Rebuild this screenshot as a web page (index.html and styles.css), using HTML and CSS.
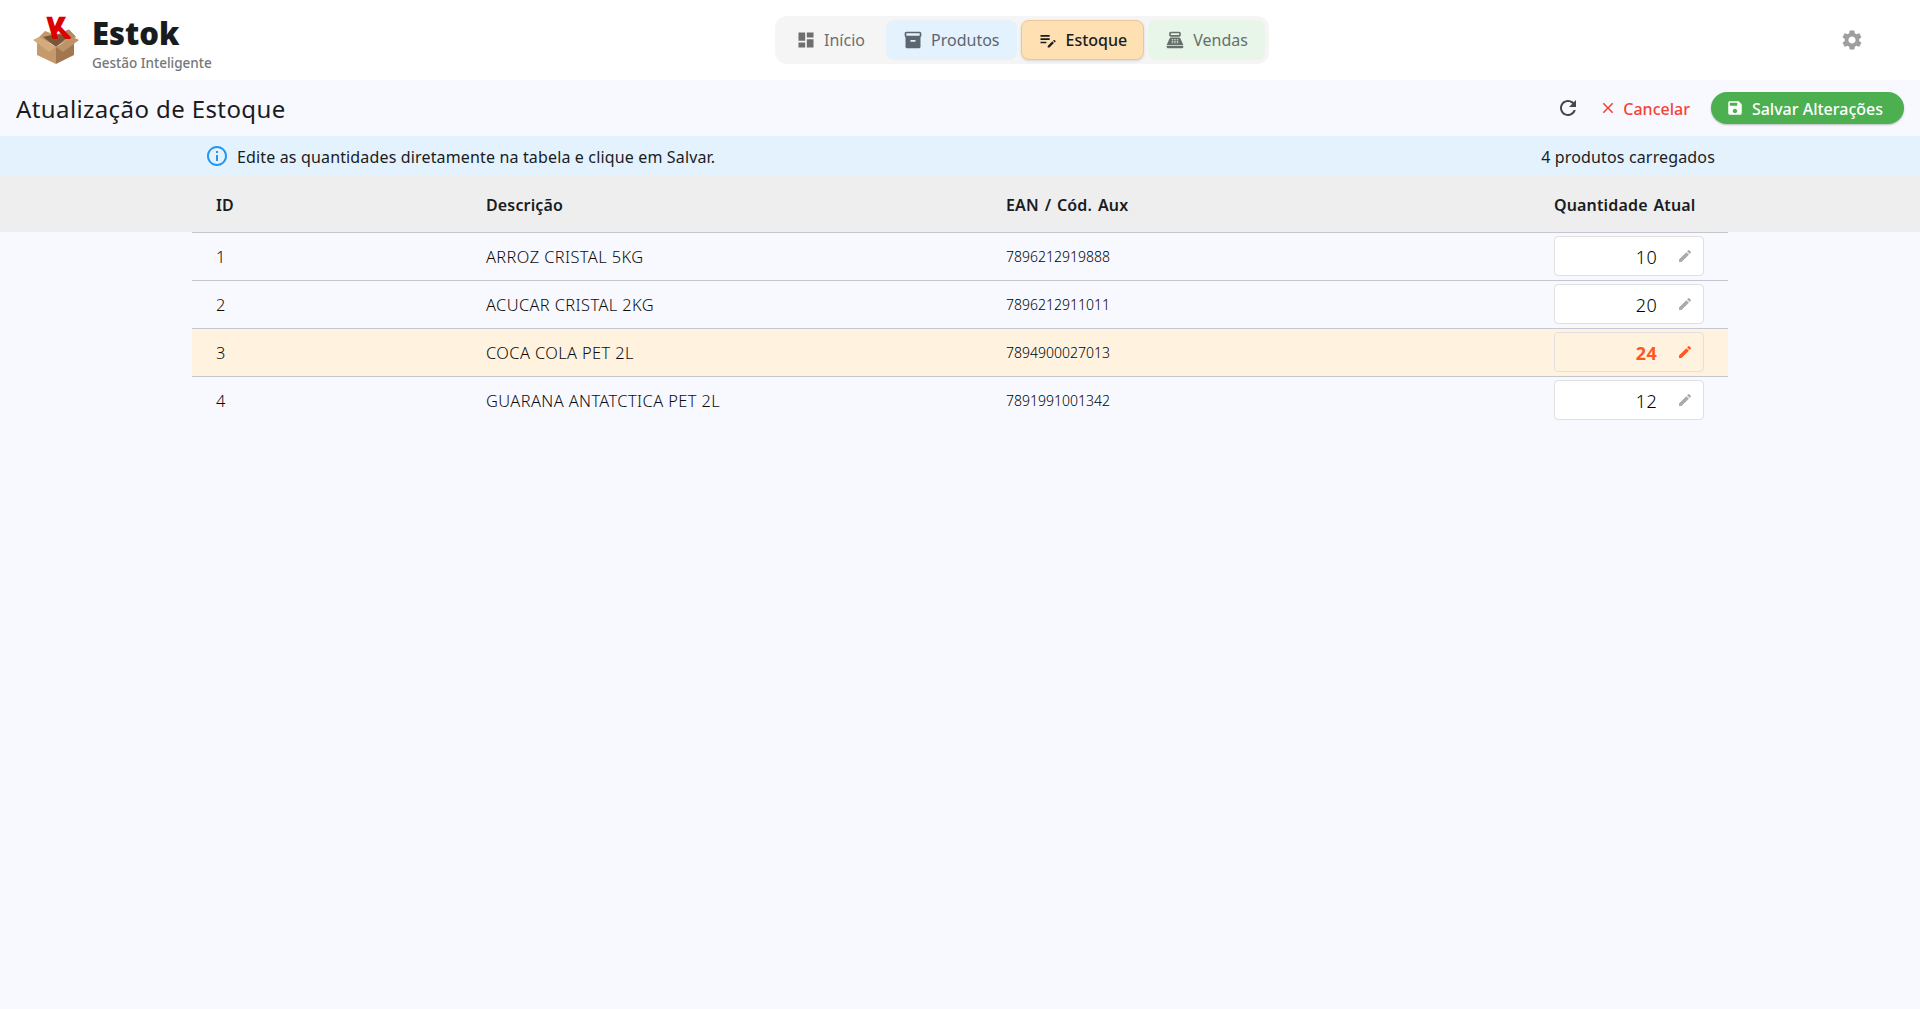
FILE: index.html
```html
<!DOCTYPE html>
<html lang="pt-BR">
<head>
<meta charset="utf-8">
<title>Estok</title>
<link rel="stylesheet" href="styles.css">
</head>
<body>
<header class="topbar">
  <div class="brand">
    <svg class="logo" viewBox="0 0 48 48" aria-hidden="true">
      <path d="M6 22 L13 15 L24 19 L37 13.500 L44 21 L24 30Z" fill="#c49a6c"/>
      <path d="M24 19 L37 13.500 L44 21 L36 23Z" fill="#b48a5f"/>
      <path d="M11 21 L24 18 L37 20 L24 31Z" fill="#7a5638"/>
      <text class="logo-k" transform="translate(19 23) skewX(16) scale(1 .95)">K</text>
      <path d="M24 31 L42 25 L42 39 L24 48Z" fill="#a2774f"/>
      <path d="M24 31 L5 25 L5 39 L24 48Z" fill="#c49a6c"/>
      <path d="M1 24 L7 21 L24 31 L17 36Z" fill="#d3ab7d"/>
      <path d="M47 24 L41 21 L24 31 L31 36Z" fill="#bd9368"/>
    </svg>
    <div class="brand-text">
      <div class="brand-name">Estok</div>
      <div class="brand-sub">Gestão Inteligente</div>
    </div>
  </div>
  <nav class="nav">
    <a class="nav-item nav-home">
      <svg class="nav-icon" viewBox="0 0 24 24"><path d="M3 13h8V3H3v10zm0 8h8v-6H3v6zm10 0h8V11h-8v10zm0-18v6h8V3h-8z"/></svg>Início
    </a>
    <a class="nav-item nav-products">
      <svg class="nav-icon" viewBox="0 0 24 24"><path d="M20 2H4c-1 0-2 .9-2 2v3.010c0 .72.43 1.340 1 1.690V20c0 1.100 1.100 2 2 2h14c.9 0 2-.9 2-2V8.700c.57-.35 1-.97 1-1.690V4c0-1.100-1-2-2-2zm-5 12H9v-2h6v2zm5-7H4V4l16-.02V7z"/></svg>Produtos
    </a>
    <a class="nav-item nav-stock">
      <svg class="nav-icon" viewBox="0 0 24 24"><path d="M3 10h11v2H3zm0-2h11V6H3zm0 8h7v-2H3zm15.010-3.130.71-.71c.39-.39 1.020-.39 1.410 0l.71.71c.39.39.39 1.020 0 1.410l-.71.71-2.120-2.120zm-1.060 1.060-5.300 5.300V21h2.120l5.300-5.300-2.120-2.120z"/></svg>Estoque
    </a>
    <a class="nav-item nav-sales">
      <svg class="nav-icon" viewBox="0 0 24 24"><path d="M17 2H7c-1.100 0-2 .9-2 2v2c0 1.100.9 2 2 2h10c1.100 0 2-.9 2-2V4c0-1.100-.9-2-2-2zm0 4H7V4h10v2zm3 16H4c-1.100 0-2-.9-2-2v-1h20v1c0 1.100-.9 2-2 2zm-1.470-11.810C18.210 9.470 17.490 9 16.700 9H7.300c-.79 0-1.510.47-1.830 1.190L2 18h20l-3.470-7.810zM9.500 16h-1c-.28 0-.5-.22-.5-.5s.22-.5.5-.5h1c.28 0 .5.22.5.5s-.22.5-.5.5zm0-2h-1c-.28 0-.5-.22-.5-.5s.22-.5.5-.5h1c.28 0 .5.22.5.5s-.22.5-.5.5zm0-2h-1c-.28 0-.5-.22-.5-.5s.22-.5.5-.5h1c.28 0 .5.22.5.5s-.22.5-.5.5zm3 4h-1c-.28 0-.5-.22-.5-.5s.22-.5.5-.5h1c.28 0 .5.22.5.5s-.22.5-.5.5zm0-2h-1c-.28 0-.5-.22-.5-.5s.22-.5.5-.5h1c.28 0 .5.22.5.5s-.22.5-.5.5zm0-2h-1c-.28 0-.5-.22-.5-.5s.22-.5.5-.5h1c.28 0 .5.22.5.5s-.22.5-.5.5zm3 4h-1c-.28 0-.5-.22-.5-.5s.22-.5.5-.5h1c.28 0 .5.22.5.5s-.22.5-.5.5zm0-2h-1c-.28 0-.5-.22-.5-.5s.22-.5.5-.5h1c.28 0 .5.22.5.5s-.22.5-.5.5zm0-2h-1c-.28 0-.5-.22-.5-.5s.22-.5.5-.5h1c.28 0 .5.22.5.5s-.22.5-.5.5z"/></svg>Vendas
    </a>
  </nav>
  <svg class="gear" viewBox="0 0 24 24"><path d="M19.140 12.940c.04-.3.06-.61.06-.94 0-.32-.02-.64-.07-.94l2.030-1.580c.18-.14.23-.41.12-.61l-1.920-3.320c-.12-.22-.37-.29-.59-.22l-2.390.96c-.5-.38-1.030-.7-1.620-.94l-.36-2.540c-.04-.24-.24-.41-.48-.41h-3.840c-.24 0-.43.17-.47.41l-.36 2.540c-.59.24-1.130.57-1.620.94l-2.390-.96c-.22-.08-.47 0-.59.22L2.740 8.870c-.12.21-.08.47.12.61l2.030 1.580c-.05.3-.09.63-.09.94s.02.64.07.94l-2.030 1.580c-.18.14-.23.41-.12.61l1.920 3.320c.12.22.37.29.59.22l2.390-.96c.5.38 1.030.7 1.620.94l.36 2.540c.05.24.24.41.48.41h3.840c.24 0 .44-.17.47-.41l.36-2.540c.59-.24 1.130-.56 1.620-.94l2.390.96c.22.08.47 0 .59-.22l1.920-3.320c.12-.22.07-.47-.12-.61l-2.010-1.580zM12 15.600c-1.980 0-3.600-1.620-3.600-3.600s1.620-3.600 3.600-3.600 3.600 1.620 3.600 3.600-1.620 3.600-3.600 3.600z"/></svg>
</header>

<section class="titlebar">
  <h1 class="page-title">Atualização de Estoque</h1>
  <div class="actions">
    <svg class="refresh" viewBox="0 0 24 24"><path d="M17.650 6.350C16.200 4.900 14.210 4 12 4c-4.420 0-7.990 3.580-7.990 8s3.570 8 7.990 8c3.730 0 6.840-2.550 7.730-6h-2.080c-.82 2.330-3.040 4-5.650 4-3.310 0-6-2.690-6-6s2.690-6 6-6c1.660 0 3.140.69 4.220 1.780L13 11h7V4l-2.350 2.350z"/></svg>
    <button class="btn-cancel">
      <svg class="btn-icon" viewBox="0 0 24 24"><path d="M19 6.410 17.590 5 12 10.590 6.410 5 5 6.410 10.590 12 5 17.590 6.410 19 12 13.410 17.590 19 19 17.590 13.410 12z"/></svg><span class="btn-label">Cancelar</span>
    </button>
    <button class="btn-save">
      <svg class="btn-icon" viewBox="0 0 24 24"><path d="M17 3H5c-1.110 0-2 .9-2 2v14c0 1.100.89 2 2 2h14c1.100 0 2-.9 2-2V7l-4-4zm-5 16c-1.660 0-3-1.340-3-3s1.340-3 3-3 3 1.340 3 3-1.340 3-3 3zm3-10H5V5h10v4z"/></svg><span class="btn-label">Salvar Alterações</span>
    </button>
  </div>
</section>

<section class="infobar">
  <div class="info-inner">
    <div class="info-left">
      <svg class="info-icon" viewBox="0 0 24 24"><path d="M11 7h2v2h-2zm0 4h2v6h-2zm1-9C6.480 2 2 6.480 2 12s4.480 10 10 10 10-4.480 10-10S17.520 2 12 2zm0 18c-4.410 0-8-3.590-8-8s3.590-8 8-8 8 3.590 8 8-3.590 8-8 8z"/></svg>
      <span>Edite as quantidades diretamente na tabela e clique em Salvar.</span>
    </div>
    <span>4 produtos carregados</span>
  </div>
</section>

<div class="head-band">
  <div class="row row-head">
    <div>ID</div><div>Descrição</div><div>EAN / Cód. Aux</div><div>Quantidade Atual</div>
  </div>
</div>
<main class="tbody">
  <div class="row row-body">
    <div>1</div><div>ARROZ CRISTAL 5KG</div><div class="ean">7896212919888</div>
    <div class="qty"><span class="qty-val">10</span><svg class="pencil" viewBox="0 0 24 24"><path d="M3 17.250V21h3.750L17.810 9.940l-3.750-3.750L3 17.250zM20.710 7.040c.39-.39.39-1.020 0-1.410l-2.340-2.340c-.39-.39-1.020-.39-1.410 0l-1.830 1.830 3.750 3.750 1.830-1.830z"/></svg></div>
  </div>
  <div class="row row-body">
    <div>2</div><div>ACUCAR CRISTAL 2KG</div><div class="ean">7896212911011</div>
    <div class="qty"><span class="qty-val">20</span><svg class="pencil" viewBox="0 0 24 24"><path d="M3 17.250V21h3.750L17.810 9.940l-3.750-3.750L3 17.250zM20.710 7.040c.39-.39.39-1.020 0-1.410l-2.340-2.340c-.39-.39-1.020-.39-1.410 0l-1.830 1.830 3.750 3.750 1.830-1.830z"/></svg></div>
  </div>
  <div class="row row-body row-changed">
    <div>3</div><div>COCA COLA PET 2L</div><div class="ean">7894900027013</div>
    <div class="qty"><span class="qty-val">24</span><svg class="pencil" viewBox="0 0 24 24"><path d="M3 17.250V21h3.750L17.810 9.940l-3.750-3.750L3 17.250zM20.710 7.040c.39-.39.39-1.020 0-1.410l-2.340-2.340c-.39-.39-1.020-.39-1.410 0l-1.830 1.830 3.750 3.750 1.830-1.830z"/></svg></div>
  </div>
  <div class="row row-body">
    <div>4</div><div>GUARANA ANTATCTICA PET 2L</div><div class="ean">7891991001342</div>
    <div class="qty"><span class="qty-val">12</span><svg class="pencil" viewBox="0 0 24 24"><path d="M3 17.250V21h3.750L17.810 9.940l-3.750-3.750L3 17.250zM20.710 7.040c.39-.39.39-1.020 0-1.410l-2.340-2.340c-.39-.39-1.020-.39-1.410 0l-1.830 1.830 3.750 3.750 1.830-1.830z"/></svg></div>
  </div>
</main>
</body>
</html>
```
FILE: styles.css
```css
* { box-sizing: border-box; }
html, body { height: 100%; }
body {
  margin: 0;
  background: #f8f9ff;
  color: #1a1c1e;
  font-family: "Noto Sans", "Open Sans", sans-serif;
  font-size: 16px;
  overflow: hidden;
}
.topbar {
  height: 80px;
  background: #fff;
  display: flex;
  justify-content: space-between;
  align-items: center;
  padding: 0 56px 0 32px;
}
.brand { display: flex; align-items: center; gap: 12px; width: 172px; }
.logo { width: 48px; height: 48px; display: block; overflow: visible; flex: none; }
.logo-k {
  font-family: "Roboto", sans-serif;
  font-weight: 900;
  font-size: 33px;
  fill: #dd0000;
}
.brand-text { display: flex; flex-direction: column; padding-top: 6px; }
.brand-name { font-size: 31px; font-weight: 900; line-height: 38px; color: #191c1f; }
.brand-sub { font-size: 13.5px; font-weight: 500; line-height: 18px; margin-top: 2px; color: #74777b; white-space: nowrap; }
.nav {
  display: flex;
  gap: 4px;
  padding: 4px;
  height: 48px;
  background: #f5f5f5;
  border-radius: 12px;
}
.nav-item {
  display: flex;
  align-items: center;
  gap: 8px;
  height: 40px;
  padding: 0 17px;
  border-radius: 8px;
  color: #5f6368;
}
.nav-icon { width: 20px; height: 20px; fill: currentColor; }
.nav-home { color: #6e6e6e; }
.nav-products { background: #e3f2fd; color: #5c6670; }
.nav-stock {
  background: #ffe0b2;
  color: #1a1c1e;
  border: 1px solid #eac79a;
  padding: 0 16px;
  font-weight: 500;
  box-shadow: 0 1px 3px rgba(0,0,0,.12);
}
.nav-sales { background: #e8f5e9; color: #66706a; }
.gear { width: 24px; height: 24px; fill: #9e9e9e; }

.titlebar {
  height: 56px;
  display: flex;
  align-items: center;
  justify-content: space-between;
  padding: 0 16px;
}
.page-title { margin: 0; padding-top: 2px; font-size: 24px; font-weight: 400; line-height: 32px; letter-spacing: .4px; }
.actions { display: flex; align-items: center; }
.refresh { width: 24px; height: 24px; fill: #43474b; margin-right: 19px; }
.btn-cancel, .btn-save {
  display: flex;
  align-items: center;
  border: 0;
  font: inherit;
  font-weight: 500;
  padding: 0;
}
.btn-label { padding-top: 2px; }
.btn-cancel { background: none; color: #f44336; margin-right: 21px; gap: 6px; }
.btn-save {
  height: 32px;
  padding: 0 21px 0 15px;
  gap: 8px;
  border-radius: 16px;
  background: #4caf50;
  color: #fff;
  box-shadow: 0 1px 2px rgba(0,0,0,.25);
}
.btn-icon { width: 18px; height: 18px; fill: currentColor; }

.infobar { height: 40px; background: #e3f2fd; letter-spacing: .15px; }
.info-inner {
  width: 80%;
  height: 100%;
  margin: 0 auto;
  padding: 0 13px;
  display: flex;
  align-items: center;
  justify-content: space-between;
}
.info-inner > span, .info-left > span { padding-top: 1px; }
.info-left { display: flex; align-items: center; gap: 8px; }
.info-icon { width: 24px; height: 24px; fill: #2196f3; }

.head-band { background: #eeeeee; height: 56px; }
.row {
  width: 80%;
  margin: 0 auto;
  display: grid;
  grid-template-columns: 270px 520px 1fr 198px;
  align-items: center;
}
.row > div { padding: 0 24px; }
.row-head { height: 56px; padding-top: 2px; font-weight: 600; letter-spacing: .15px; word-spacing: 1.5px; }
.row-body { height: 48px; border-top: 1px solid #c4c6d0; font-size: 16.4px; font-weight: 300; letter-spacing: .4px; color: #0c0c0c; }
.row-changed { background: #fff3e0; }
.row > .ean { font-size: 14px; letter-spacing: 0; font-weight: 300; color: #000; }
.row > .qty {
  margin: 0 24px 1px;
  padding: 0 10px 0 0;
  height: 40px;
  display: flex;
  align-items: center;
  justify-content: flex-end;
  gap: 20px;
  background: #fff;
  border: 1px solid #e0e0e0;
  border-radius: 4px;
}
.qty-val { font-size: 18px; color: #000; padding-top: 2px; letter-spacing: .3px; }
.pencil { width: 16px; height: 16px; fill: #aaaaaa; }
.row-changed > .qty { background: transparent; }
.row-changed .qty-val { color: #ff5722; font-weight: 700; }
.row-changed .pencil { fill: #ff5722; }
```
